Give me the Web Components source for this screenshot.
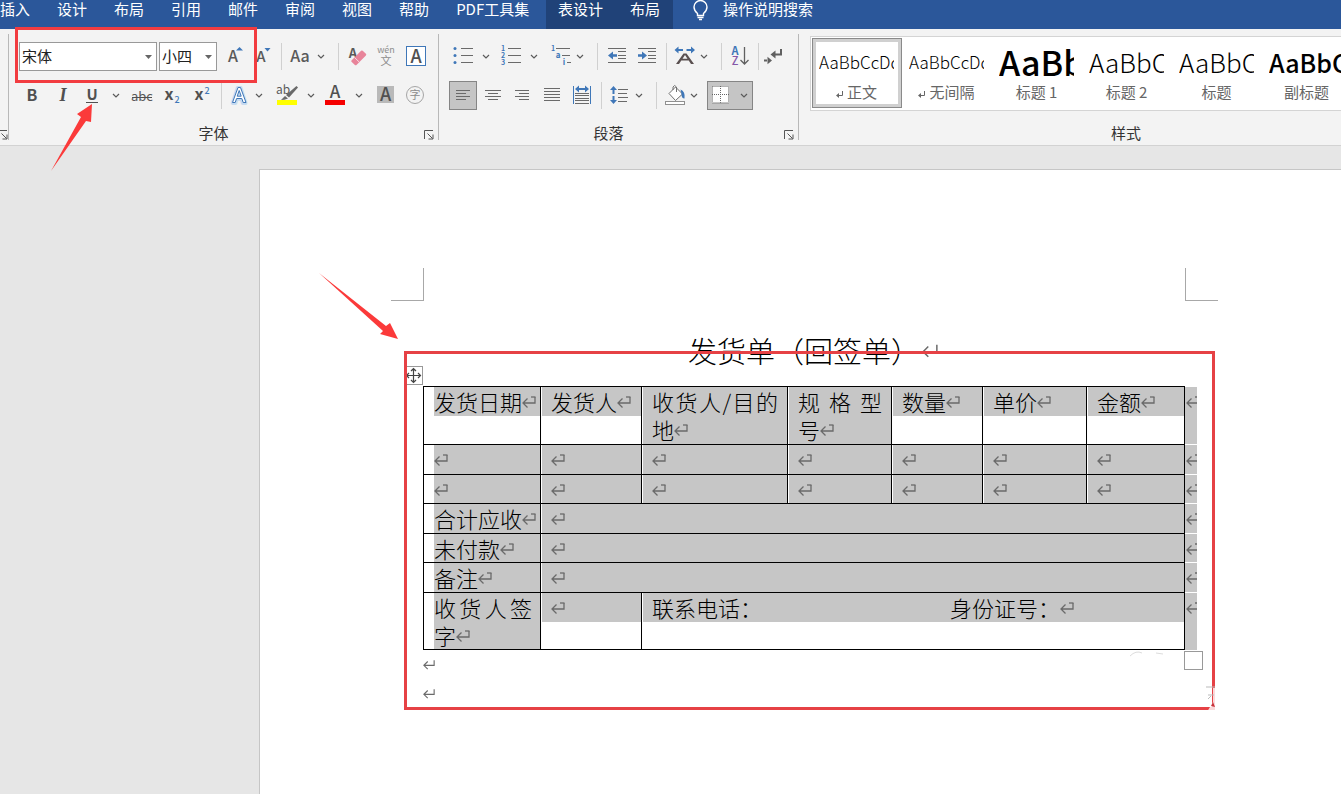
<!DOCTYPE html>
<html lang="zh-CN">
<head>
<meta charset="utf-8">
<title>发货单（回签单）</title>
<style>
html, body { margin: 0; height: 100%; overflow: hidden; }
body { font-family: "Noto Sans", "Noto Sans CJK SC", sans-serif; font-size: 15px; background: #e6e6e6; }
</style>
</head>
<body>
<word-app></word-app>
<script>
const UI = '"Noto Sans CJK SC", "Noto Sans", sans-serif';
const G = '#5a5a5a', B = '#3f77b8';
const lines = (list, c = '#6a6a6a') => list.map(([x, y, w]) => `<rect x="${x}" y="${y}" width="${w}" height="1" fill="${c}"/>`).join('');
const txt = (x, y, size, s, fill = G, extra = '') => `<text x="${x}" y="${y}" font-size="${size}" fill="${fill}" text-anchor="middle" ${extra}>${s}</text>`;
const med = 'font-weight="500"', bold = 'font-weight="700"';

/* Every icon is drawn on a 30 x 28 box, centred on 15,14. */
const ICONS = {
  grow: txt(14, 20, 16, 'A', G, med) + `<path d="M17 8.5l3.5-3.5 3.5 3.5z" fill="${B}"/>`,
  shrink: txt(13, 20, 15, 'A', G, med) + `<path d="M16.5 6h6l-3 3.5z" fill="${B}"/>`,
  changeCase: txt(14, 20, 16, 'Aa', G, med),
  clear: txt(11, 16, 13, 'A', G, bold) + '<path d="M9.5 18.6l9.6-9.8q.8-.8 1.6 0l3.2 3q.8.8 0 1.6l-9.4 9.6q-.8.7-1.6 0l-3.4-3.2q-.7-.6 0-1.2z" fill="#e8849a"/><path d="M12.5 15.5l4.8 4.6" stroke="#f7dbe2" stroke-width="1"/>',
  phonetic: txt(15, 11, 9, 'wén', '#8c8c8c') + txt(15, 23, 11, '文', '#8c8c8c'),
  charBorder: `<rect x="5.5" y="4.5" width="19" height="19" fill="#fff" stroke="${B}"/>` + txt(15, 20.5, 18, 'A', '#505050', med),
  bold: txt(15, 20, 16, 'B', '#505050', bold),
  italic: txt(16, 20, 18, 'I', '#505050', 'font-family="Liberation Serif" font-style="italic" font-weight="700"'),
  underline: txt(15, 19, 15, 'U', '#505050', bold) + '<rect x="9" y="21" width="12" height="1" fill="#505050"/>',
  strike: txt(15, 20, 13, 'abc') + '<rect x="5" y="16" width="20" height="1" fill="#505050"/>',
  sub: txt(12, 19, 16, 'x', '#505050', bold) + txt(20, 22, 9, '2', B, med),
  sup: txt(12, 19, 16, 'x', '#505050', bold) + txt(20, 13, 9, '2', B, med),
  effects: txt(14, 21.5, 20, 'A', '#fff', `font-weight="500" stroke="#c5daf0" stroke-width="4" stroke-linejoin="round"`) + `<path d="M7.500 21.500L13 6.500h2.500l5.500 15h-2.800l-1.400-4h-5.200l-1.400 4zM12.200 15.200h4L14.200 9.500z" fill="#fff" stroke="${B}" stroke-width="1"/>`,
  highlight: txt(11, 13, 12, 'ab') + '<path d="M24.5 5l1.5 1.5-9 10-3-2.6z" fill="#696969"/><path d="M13 15l3 2.5-3.5 1.3-3.5.2z" fill="#696969"/><rect x="5" y="19" width="20" height="5" fill="#ffff00"/>',
  fontColor: txt(15, 17, 17, 'A', '#505050', med) + '<rect x="5" y="19" width="20" height="5" fill="#f50000"/>',
  shade: '<rect x="7" y="5" width="17" height="17" fill="#b9b9b9"/>' + txt(15.5, 20, 18, 'A', '#505050', med),
  enclose: '<circle cx="15" cy="14" r="8.5" fill="none" stroke="#a5a5a5"/>' + txt(15, 18, 11, '字', '#8c8c8c'),
  bullets: `<g fill="${B}"><circle cx="7" cy="6.5" r="1.5"/><circle cx="7" cy="13.5" r="1.5"/><circle cx="7" cy="20.5" r="1.5"/></g>` + lines([[13, 6, 12], [13, 13, 12], [13, 20, 12]]),
  numbers: txt(7, 9, 7, '1', B, bold) + txt(7, 16, 7, '2', B, bold) + txt(7, 23, 7, '3', B, bold) + lines([[12, 6, 13], [12, 13, 13], [12, 20, 13]]),
  multilevel: txt(7, 9, 7, '1', B, bold) + txt(12, 16, 8, 'a', B, bold) + txt(18, 23, 8, 'i', B, bold) + lines([[10, 6, 14], [16, 13, 8], [21, 20, 4]]),
  outdent: lines([[6, 6, 18], [16, 9, 8], [16, 13, 8], [16, 16, 8], [6, 20, 18]]) + `<path d="M6 13.5l5-4v2.7h4v2.6h-4v2.7z" fill="${B}"/>`,
  indent: lines([[6, 6, 18], [16, 9, 8], [16, 13, 8], [16, 16, 8], [6, 20, 18]]) + `<path d="M15 13.5l-5-4v2.7H6v2.6h4v2.7z" fill="${B}"/>`,
  asian: `<path d="M6 22L13.500 11.500h3L24 22h-3l-2.300-3.500h-7.400L9 22zM12.500 16.800h5L15 13z" fill="#5a5050"/><path d="M4.500 8l4-3.500V7H13v2H8.500v2.500zM25 8l-4-3.500V7h-4.500v2H21v2.500z" fill="${B}"/>`,
  sort: txt(10, 13, 11, 'A', B, bold) + txt(10, 23, 11, 'Z', '#8457a8', med) + '<path d="M19.500 5v17M15.500 18l4 4 4-4" fill="none" stroke="#606060" stroke-width="1.3"/>',
  showMarks: '<path d="M23 7v5.500h-7" fill="none" stroke="#606060" stroke-width="2"/><path d="M12.500 12.500l5-4v8zM14 18.500l-4.500-3.800v7.600zM6 17.500h4v2H6z" fill="#606060"/>',
  left: lines([[8, 9, 14], [8, 12, 10], [8, 15, 14], [8, 18, 10]]),
  center: lines([[7, 9, 16], [10, 12, 10], [7, 15, 16], [10, 18, 10]]),
  right: lines([[8, 9, 14], [12, 12, 10], [8, 15, 14], [12, 18, 10]]),
  justify: lines([[7, 7, 16], [7, 10, 16], [7, 13, 16], [7, 16, 16], [7, 19, 16]]),
  distribute: `<path d="M6.500 5v18M23.500 5v18" stroke="${B}" /><path d="M8 8l4-3.500V7h6V4.500L22 8l-4 3.500V9h-6v2.500z" fill="${B}"/>` + lines([[8, 12, 14], [8, 14, 14], [8, 17, 14], [8, 19, 14], [8, 22, 14]]),
  spacing: `<path d="M8.500 5l3.500 4H9.500v4h-2V9H5zM8.500 23l3.500-4H9.500v-4h-2v4H5z" fill="${B}"/>` + lines([[13, 8, 10], [13, 12, 9], [13, 16, 10], [13, 20, 9]]),
  bucket: '<path d="M9 12.500L15.500 6l7 7-7 6.500zM13 9V6q1.500-3 3.500 0v5" fill="#fff" stroke="#707070"/><path d="M20.500 8.500q5 2 4 9-3 0-3-4.500z" fill="#3f77b8"/><rect x="5.500" y="20.500" width="19" height="3" fill="#fff" stroke="#909090"/>',
  borders: '<rect x="6" y="5" width="17" height="17" fill="#fff"/><path d="M6.500 5.500h16v16M6.500 5.500v16M14.500 5v17M6 13.500h17" fill="none" stroke="#666" stroke-dasharray="1 1"/><path d="M6 22h17" stroke="#8a8a8a"/>'
};

const define = (name, html, setup) => {
  const tpl = document.createElement('template');
  tpl.innerHTML = html;
  customElements.define(name, class extends HTMLElement {
    constructor() { super(); this.attachShadow({ mode: 'open' }).append(tpl.content.cloneNode(true)); }
    connectedCallback() { if (setup) setup.call(this, this.shadowRoot); }
  });
};

define('icon-button', `<style>
  :host { display: block; flex: none; width: 30px; height: 29px; }
  :host([size="s"]) { width: 28px; }
  button { display: flex; align-items: center; justify-content: center; width: 100%; height: 100%; margin: 0; padding: 0; border: 0; background: none; box-sizing: border-box; }
  svg { display: block; flex: none; width: 30px; height: 28px; overflow: visible; margin-bottom: 1px; font-family: ${UI}; }
  :host([pressed]) button { background: #c5c5c5; box-shadow: inset 0 0 0 1px #858585; }
</style><button type="button"><svg viewBox="0 0 30 28" aria-hidden="true"></svg></button>`, function (r) {
  r.querySelector('svg').innerHTML = ICONS[this.getAttribute('icon')];
  r.querySelector('button').setAttribute('aria-label', this.getAttribute('label') || this.getAttribute('icon'));
});

define('drop-arrow', `<style>
  :host { display: block; flex: none; width: 18px; height: 29px; }
  button { display: grid; place-items: center; width: 100%; height: 100%; padding: 0; border: 0; background: none; }
</style><button type="button" aria-label="更多选项"><svg width="8" height="5" viewBox="0 0 8 5"><path d="M1 1l3 3 3-3" fill="none" stroke="#5a5a5a" stroke-width="1.2"/></svg></button>`);

define('bar-line', `<style>:host { display: block; flex: none; width: 1px; height: 27px; margin: 0 4px; background: #d0d0d0; } :host([wide]) { margin-left: 8px; }</style>`);

define('combo-box', `<style>
  :host { display: block; position: relative; flex: none; width: 138px; height: 29px; }
  :host([small]) { width: 58px; }
  select { appearance: none; width: 100%; height: 100%; margin: 0; padding: 0 0 2px 2px; border: 1px solid #999; border-radius: 0; background: #fff; color: #222; font: 15px ${UI}; }
  svg { position: absolute; right: 5px; top: 13px; pointer-events: none; }
</style><select></select><svg width="7" height="4"><path d="M0 0h7L3.500 4z" fill="#666"/></svg>`, function (r) {
  const s = r.querySelector('select');
  s.setAttribute('aria-label', this.getAttribute('label'));
  s.append(new Option(this.getAttribute('value')));
});

define('ribbon-group', `<style>
  :host { display: flex; flex-direction: column; box-sizing: border-box; flex: none; padding-top: 8px; height: 106px; border-right: 1px solid #b8b8b8; }
  .row { display: flex; align-items: center; height: 29px; }
  .row + .row { margin-top: 10px; }
  footer { display: flex; height: 14px; margin-top: 16px; line-height: 14px; color: #333; }
  span { flex: 1; text-align: center; }
  button { width: 20px; height: 14px; padding: 3px 0 0 6px; margin: 0; border: 0; background: none; flex: none; }
  svg { display: block; }
</style>
<div class="row"><slot name="top"></slot></div>
<div class="row"><slot name="bottom"></slot></div>
<footer><span></span><button type="button" aria-label="对话框启动器"><svg width="10" height="10" viewBox="0 0 10 10"><path d="M.5 9V.5H9M3.500 3.500l5 5M9 4.500v4.500H4.500" fill="none" stroke="#555"/></svg></button></footer>`, function (r) {
  r.querySelector('span').textContent = this.getAttribute('label') || '';
});

define('style-card', `<style>
  :host { display: block; flex: none; width: 90px; height: 70px; box-sizing: border-box; padding: 4px 8px 4px 7px; color: #000; --size: 17px; --weight: 300; }
  :host([selected]) { border: 1px solid #8a8a8a; padding: 3px 7px 3px 6px; box-shadow: inset 0 0 0 3px #d0d0d0; }
  :host([kind="h1"]) { --size: 34px; --weight: 500; }
  :host([kind="h2"]) { --size: 26px; }
  :host([kind="sub"]) { --size: 25px; --weight: 500; }
  button { display: block; width: 100%; height: 100%; padding: 0; border: 0; background: none; color: inherit; text-align: left; font-family: ${UI}; }
  b { display: block; height: 38px; line-height: 36px; overflow: hidden; white-space: nowrap; font-size: var(--size); font-weight: var(--weight); }
  span { display: flex; align-items: center; justify-content: center; gap: 3px; height: 20px; line-height: 20px; font-size: 15px; color: #666; white-space: nowrap; }
  svg { display: none; margin-top: 4px; }
  :host([para]) svg { display: block; }
</style><button type="button"><b></b><span><svg width="8" height="7" viewBox="0 0 8 7"><path d="M6.500 0v4.500H2" fill="none" stroke="#666"/><path d="M0 4.500L3 2v5z" fill="#666"/></svg><slot></slot></span></button>`, function (r) {
  r.querySelector('b').textContent = this.getAttribute('sample');
});

define('tab-strip', `<style>
  :host { display: flex; height: 29px; background: #2b579a; color: #fff; font-family: ${UI}; }
  nav { display: flex; gap: 27px; width: 546px; flex: none; }
  .table-tools { box-sizing: border-box; width: 127px; padding-left: 12px; background: #204278; }
  button { flex: none; padding: 0 0 11px; margin: 0; border: 0; background: none; color: inherit; font: 15px/18px ${UI}; white-space: nowrap; height: 29px; }
  .tell { display: flex; align-items: flex-start; gap: 15px; padding-left: 20px; }
  svg { display: block; }
</style>
<nav><button>插入</button><button>设计</button><button>布局</button><button>引用</button><button>邮件</button><button>审阅</button><button>视图</button><button>帮助</button><button>PDF工具集</button></nav>
<nav class="table-tools"><button>表设计</button><button>布局</button></nav>
<button class="tell"><svg width="15" height="21" viewBox="0 0 15 21"><path d="M4.500 15.500v-2Q1 10.500 1 7a6.500 6.500 0 0 1 13 0q0 3.500-3.500 6.500v2zM4.500 17.500h6M6 19.500h3" fill="none" stroke="#fff" stroke-width="1.4"/></svg><span>操作说明搜索</span></button>`);

const slotRow = (slot, pad, html) => `<div slot="${slot}" class="tools" style="padding-left:${pad}px">${html}</div>`;
const ib = (n, size, cls = '') => `<icon-button icon="${n}"${size ? ' size="s"' : ''} class="${cls}"></icon-button>`;
const da = '<drop-arrow></drop-arrow>', near = '<drop-arrow class="back4"></drop-arrow>';
const bl = '<bar-line></bar-line>', blw = '<bar-line wide></bar-line>';

define('ribbon-bar', `<style>
  :host { display: flex; box-sizing: border-box; height: 117px; padding: 5px 0; background: #f3f3f3; border-bottom: 1px solid #d2d2d2; font-family: ${UI}; }
  .tools { display: flex; align-items: center; }
  .stub { width: 9px; direction: rtl; overflow: hidden; }
  .font { width: 430px; }
  .para { width: 360px; }
  .styles { flex: 1; min-width: 0; padding: 2px 0 0 11px; }
  .gallery { display: flex; height: 75px; padding: 1px; border: 1px solid #d4d4d4; border-right: 0; background: #fff; box-sizing: border-box; overflow: hidden; }
  .caption { margin-top: 15px; padding-left: 101px; line-height: 14px; text-align: center; color: #333; }
  .split { display: flex; background: #c5c5c5; box-shadow: inset 0 0 0 1px #858585; }
  .combos { display: flex; gap: 2px; }
  .gap2 { margin-left: 2px; } .gap4 { margin-left: 4px; }
  .back4 { margin-left: -4px; }
</style>
<ribbon-group class="stub"></ribbon-group>
<ribbon-group class="font" label="字体">
${slotRow('top', 10, `<div class="combos"><combo-box label="字体" value="宋体"></combo-box><combo-box small label="字号" value="小四"></combo-box></div>` + ib('grow', 0, 'gap2') + ib('shrink', 1) + bl + ib('changeCase') + near + blw + ib('clear', 1) + ib('phonetic') + ib('charBorder'))}
${slotRow('bottom', 8, ib('bold') + ib('italic') + ib('underline') + da + ib('strike', 0, 'gap2') + ib('sub') + ib('sup') + bl + ib('effects', 1) + near + ib('highlight', 0, 'gap4') + da + ib('fontColor') + da + ib('shade', 0, 'gap2') + ib('enclose'))}
</ribbon-group>
<ribbon-group class="para" label="段落">
${slotRow('top', 10, ib('bullets', 1) + da + ib('numbers', 1, 'gap2') + da + ib('multilevel', 1, 'gap4') + near + blw + ib('outdent') + ib('indent') + bl + ib('asian', 1) + near + blw + ib('sort', 1) + bl + ib('showMarks', 1, 'back4'))}
${slotRow('bottom', 10, '<icon-button icon="left" size="s" pressed></icon-button>' + ib('center', 1, 'gap2') + ib('right') + ib('justify') + ib('distribute') + bl + ib('spacing', 1) + near + blw + ib('bucket', 1) + near + '<div class="split gap4">' + ib('borders', 1) + da + '</div>')}
</ribbon-group>
<section class="styles">
  <div class="gallery">
    <style-card selected para sample="AaBbCcDd">正文</style-card>
    <style-card para sample="AaBbCcDd">无间隔</style-card>
    <style-card kind="h1" sample="AaBb">标题 1</style-card>
    <style-card kind="h2" sample="AaBbCc">标题 2</style-card>
    <style-card kind="h2" sample="AaBbCc">标题</style-card>
    <style-card kind="sub" sample="AaBbCc">副标题</style-card>
  </div>
  <div class="caption">样式</div>
</section>`);

define('return-mark', `<style>
  :host { display: inline-block; width: 14px; height: 12px; margin-right: -14px; }
  :host([plain]) { width: 12px; height: 11px; margin: 0; }
  :host([large]) { width: 16px; height: 15px; margin: 0; }
  svg { display: block; width: 100%; height: 100%; }
  .cap { display: inline; }
  :host([plain]) .cap, :host([large]) .cap { display: none; }
</style><svg viewBox="0 0 14 12"><path d="M13 1v6H1M5.500 2.500L1 7l4.500 4.500" fill="none" stroke="#6a6a6a" stroke-width="1.3"/><path class="cap" d="M13.500 1H9" stroke="#6a6a6a" stroke-width="1.3"/></svg>`);

const rm = '<return-mark></return-mark>';
const end = `<td class="end">${rm}</td>`;
const row = (cells, cls = '') => `<tr class="${cls}">${cells}${end}</tr>`;
const blank = `<td>${rm}</td>`.repeat(7);
const wide = t => `<td>${t}${rm}</td><td colspan="6">${rm}</td>`;

define('delivery-table', `<style>
  :host { display: block; position: relative; width: 775px; }
  table { table-layout: fixed; width: 774px; border-collapse: collapse; font: 300 22px/28px ${UI}; color: #000; }
  td, th { box-sizing: border-box; height: 29px; padding: 0 9px 0 10px; border: 1px solid #000; vertical-align: top; font-weight: 300; text-align: justify; background: linear-gradient(#c6c6c6 0 0) no-repeat 1px 0; }
  .even td { height: 30px; }
  .head th, .head td { height: 58px; }
  td:first-child, th:first-child { background-position: 10px 0; padding-left: 10px; padding-right: 8px; }
  .one { background-size: 100% 29px; }
  .end { padding: 0 0 0 1px; border: 0; border-top: 1px solid #fff; background-position: 0 0; overflow: hidden; }
  .head .end { border-top-color: transparent; }
  return-mark { position: relative; top: -3px; }
  .id { margin-left: 188px; }
  .move { position: absolute; left: -19px; top: -20px; }
  .size { position: absolute; right: -5px; bottom: -20px; width: 17px; height: 17px; border: 1px solid #999; background: #fff; }
</style>
<svg class="move" width="19" height="19"><rect x=".5" y=".5" width="18" height="18" fill="#fff" stroke="#999"/><path d="M9.500 3v13M3 9.500h13M7 5l2.500-2.500L12 5M7 14l2.500 2.500L12 14M5 7L2.500 9.500 5 12M14 7l2.500 2.500L14 12" fill="none" stroke="#444" stroke-width="1.2"/></svg>
<table>
<colgroup><col style="width:117px"><col style="width:101px"><col style="width:146px"><col style="width:104px"><col style="width:91px"><col style="width:104px"><col style="width:98px"><col></colgroup>
${row(`<th class="one">发货日期${rm}</th><th class="one">发货人${rm}</th><th>收货人/目的地${rm}</th><th>规格型号${rm}</th><th class="one">数量${rm}</th><th class="one">单价${rm}</th><th class="one">金额${rm}</th>`, 'head')}
${row(blank, 'even')}${row(blank)}${row(wide('合计应收'), 'even')}${row(wide('未付款'))}${row(wide('备注'), 'even')}
${row(`<td>收货人签字${rm}</td><td class="one">${rm}</td><td class="one" colspan="5">联系电话：<span class="id">身份证号：</span>${rm}</td>`)}
</table><div class="size"></div>`);

define('doc-page', `<style>
  :host { display: block; flex: 1; min-height: 0; box-sizing: border-box; margin: 23px 0 0 259px; border: solid #c6c6c6; border-width: 1px 0 0 1px; background: #fff; padding: 98px 0 0 131px; overflow: hidden; }
  .crops { display: flex; justify-content: space-between; width: 827px; height: 33px; }
  .crops i { box-sizing: border-box; width: 33px; border: 0 solid #a8a8a8; border-width: 0 1px 1px 0; }
  .crops i + i { border-width: 0 0 1px 1px; }
  main { margin-left: 32px; width: 775px; }
  h1 { display: flex; align-items: center; justify-content: center; width: 762px; box-sizing: border-box; padding-left: 18px; margin: 29px 0 15px; height: 41px; font: 300 29px/41px ${UI}; white-space: nowrap; }
  h1 return-mark { margin-left: 2px; }
  p { margin: 0; height: 29px; line-height: 29px; }
</style>
<div class="crops"><i></i><i></i></div>
<main><h1>发货单（回签单）<return-mark large></return-mark></h1>
<delivery-table></delivery-table>
<p><return-mark plain></return-mark></p><p><return-mark plain></return-mark></p></main>`);

/* Red boxes and arrows drawn freely over the window. */
define('red-notes', `<style>
  :host { position: absolute; left: 0; top: 0; width: 1px; height: 1px; pointer-events: none; }
  svg { display: block; width: 1px; height: 1px; overflow: visible; }
</style><svg>
<g fill="none" stroke="#f23c40" stroke-width="3"><rect x="16.500" y="28.500" width="239" height="53"/><rect x="405.500" y="352.500" width="808" height="356" stroke="#e64145"/></g>
<g fill="#fb3a3a"><path d="M51 171L81 117 77 114 92 104 91 122 86 121z"/><path d="M319 273L386 326 390 323 398 339 380 334 383 331z"/></g>
<path d="M1130 656q6-6 12-3M1156 653l7 1" fill="none" stroke="#ddd"/>
<path d="M1205 688h12v22l-10 2 6-10v-14z" fill="#fff" opacity=".8"/><path d="M1206 687h9M1208 695h6M1211 696l-3 3" stroke="#bbb" fill="none"/><path d="M1211 706l2-4 2 5z" fill="#c8323a"/>
</svg>`);

define('word-app', `<style>
  :host { display: flex; flex-direction: column; position: relative; height: 100vh; overflow: hidden; background: #e6e6e6; }
  tab-strip, ribbon-bar { flex: none; }
</style><tab-strip></tab-strip><ribbon-bar></ribbon-bar><doc-page></doc-page><red-notes></red-notes>`);
</script>
</body>
</html>
